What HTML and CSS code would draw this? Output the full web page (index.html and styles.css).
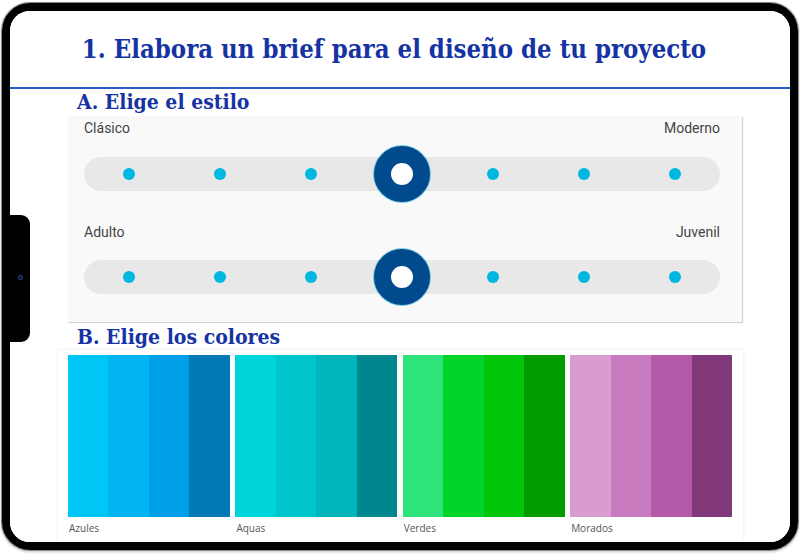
FILE: index.html
```html
<!DOCTYPE html>
<html lang="es">
<head>
  <meta charset="UTF-8">
  <title>Brief de diseño</title>
  <link rel="stylesheet" href="styles.css">
</head>
<body>

  <div class="device">
    <div class="screen">
      <header class="brief-header">
        <h1>1. Elabora un brief para el diseño de tu proyecto</h1>
      </header>

      <main class="brief-body">
        <h2>A. Elige el estilo</h2>
        <div class="slider-panel">
          <div class="slider-labels"><span>Clásico</span><span>Moderno</span></div>
          <div class="slider-track">
            <span class="dot"></span>
            <span class="dot"></span>
            <span class="dot"></span>
            <span class="handle"></span>
            <span class="dot"></span>
            <span class="dot"></span>
            <span class="dot"></span>
          </div>

          <div class="slider-labels second"><span>Adulto</span><span>Juvenil</span></div>
          <div class="slider-track">
            <span class="dot"></span>
            <span class="dot"></span>
            <span class="dot"></span>
            <span class="handle"></span>
            <span class="dot"></span>
            <span class="dot"></span>
            <span class="dot"></span>
          </div>
        </div>

        <h2 class="colores-title">B. Elige los colores</h2>
        <div class="palette-panel">
          <div class="palette">
            <div class="swatch-group azules">
              <div class="strips"><span></span><span></span><span></span><span></span></div>
              <p>Azules</p>
            </div>
            <div class="swatch-group aquas">
              <div class="strips"><span></span><span></span><span></span><span></span></div>
              <p>Aquas</p>
            </div>
            <div class="swatch-group verdes">
              <div class="strips"><span></span><span></span><span></span><span></span></div>
              <p>Verdes</p>
            </div>
            <div class="swatch-group morados">
              <div class="strips"><span></span><span></span><span></span><span></span></div>
              <p>Morados</p>
            </div>
          </div>
        </div>
      </main>
    </div>

    <!-- boton lateral de la tablet -->
    <div class="side-button"><span class="camera"></span></div>
  </div>

</body>
</html>
```

FILE: styles.css
```css
body {
  margin: 0;
  width: 800px;
  height: 556px;
  overflow: hidden;
  background-color: #fff;
}
.device {
  position: relative;
  margin: 3px 2px 0 2px;
  height: 547px;
  box-sizing: border-box;
  border: 8px solid #000;
  border-radius: 28px;
  box-shadow: 0 0 0 1px #8a8a8a, 0 1px 3px 1px #c8c8c8;
}
.screen {
  height: 100%;
  border-radius: 20px;
  overflow: hidden;
  background-color: #fff;
}
.brief-header {
  height: 78px;
  box-sizing: border-box;
  border-bottom: 2px solid #2a5bc6;
  display: flex;
  align-items: center;
  justify-content: center;
  padding-right: 12px;
}
.brief-header h1 {
  margin: 0;
  font-family: "DejaVu Serif", serif;
  font-stretch: condensed;
  font-weight: bold;
  font-size: 25.5px;
  line-height: 32px;
  color: #1533a3;
}
.brief-body {
  padding: 0 48px 0 58px;
}
.brief-body h2 {
  margin: 0 0 0 9px;
  font-family: "DejaVu Serif", serif;
  font-stretch: condensed;
  font-weight: bold;
  font-size: 21px;
  line-height: 26px;
  color: #1533a3;
}
.brief-body h2.colores-title {
  margin-top: 2px;
}
.slider-panel {
  margin-top: 1px;
  padding: 4px 22px 28px 16px;
  background-color: #f9f9f9;
  box-shadow: 1px 1px 1px #d2d2d2;
}
.slider-labels {
  display: flex;
  justify-content: space-between;
  font-family: Roboto, sans-serif;
  font-size: 14px;
  line-height: 16px;
  color: #444;
}
.slider-labels.second {
  margin-top: 33px;
}
.slider-track {
  margin-top: 21px;
  height: 34px;
  border-radius: 17px;
  background-color: #e8e8e8;
  display: grid;
  grid-template-columns: repeat(7, 1fr);
  grid-template-rows: 34px;
  align-items: center;
  justify-items: center;
}
.slider-labels.second + .slider-track {
  margin-top: 20px;
}
.dot {
  width: 12px;
  height: 12px;
  border-radius: 50%;
  background-color: #00b7e1;
}
.handle {
  width: 56px;
  height: 56px;
  box-sizing: border-box;
  border-radius: 50%;
  border: 17px solid #004a8d;
  background-color: #fff;
  box-shadow: 0 0 0 1px rgba(0, 170, 210, 0.5);
}
.palette-panel {
  margin: 0 -1px 0 -10px;
  padding: 5px 10px 30px 10px;
  background-color: #fff;
  box-shadow: 0 0 3px rgba(0, 0, 0, 0.1);
}
.palette {
  width: 664px;
  display: grid;
  grid-template-columns: repeat(4, 1fr);
  column-gap: 5.5px;
}
.strips {
  height: 162px;
  display: grid;
  grid-template-columns: repeat(4, 1fr);
}
.swatch-group p {
  margin: 4px 0 0 1px;
  font-family: "Open Sans", sans-serif;
  font-size: 10px;
  line-height: 14px;
  color: #555;
}
.azules span:nth-child(1) { background-color: #00c6f6; }
.azules span:nth-child(2) { background-color: #00b5f0; }
.azules span:nth-child(3) { background-color: #00a0e8; }
.azules span:nth-child(4) { background-color: #0079b3; }
.aquas span:nth-child(1) { background-color: #00d4da; }
.aquas span:nth-child(2) { background-color: #00c5cc; }
.aquas span:nth-child(3) { background-color: #00b5bb; }
.aquas span:nth-child(4) { background-color: #00878d; }
.verdes span:nth-child(1) { background-color: #2ee37a; }
.verdes span:nth-child(2) { background-color: #00d42a; }
.verdes span:nth-child(3) { background-color: #00c60a; }
.verdes span:nth-child(4) { background-color: #009b00; }
.morados span:nth-child(1) { background-color: #d89ccf; }
.morados span:nth-child(2) { background-color: #c77bbe; }
.morados span:nth-child(3) { background-color: #b259a8; }
.morados span:nth-child(4) { background-color: #823979; }
.side-button {
  position: absolute;
  left: 0;
  top: 204px;
  width: 20px;
  height: 127px;
  background-color: #000;
  border-radius: 0 9px 9px 0;
}
.camera {
  position: absolute;
  left: 8px;
  top: 60px;
  width: 3px;
  height: 3px;
  border-radius: 50%;
  background-color: #0a1020;
  border: 1px solid #2a4fa8;
}
```
